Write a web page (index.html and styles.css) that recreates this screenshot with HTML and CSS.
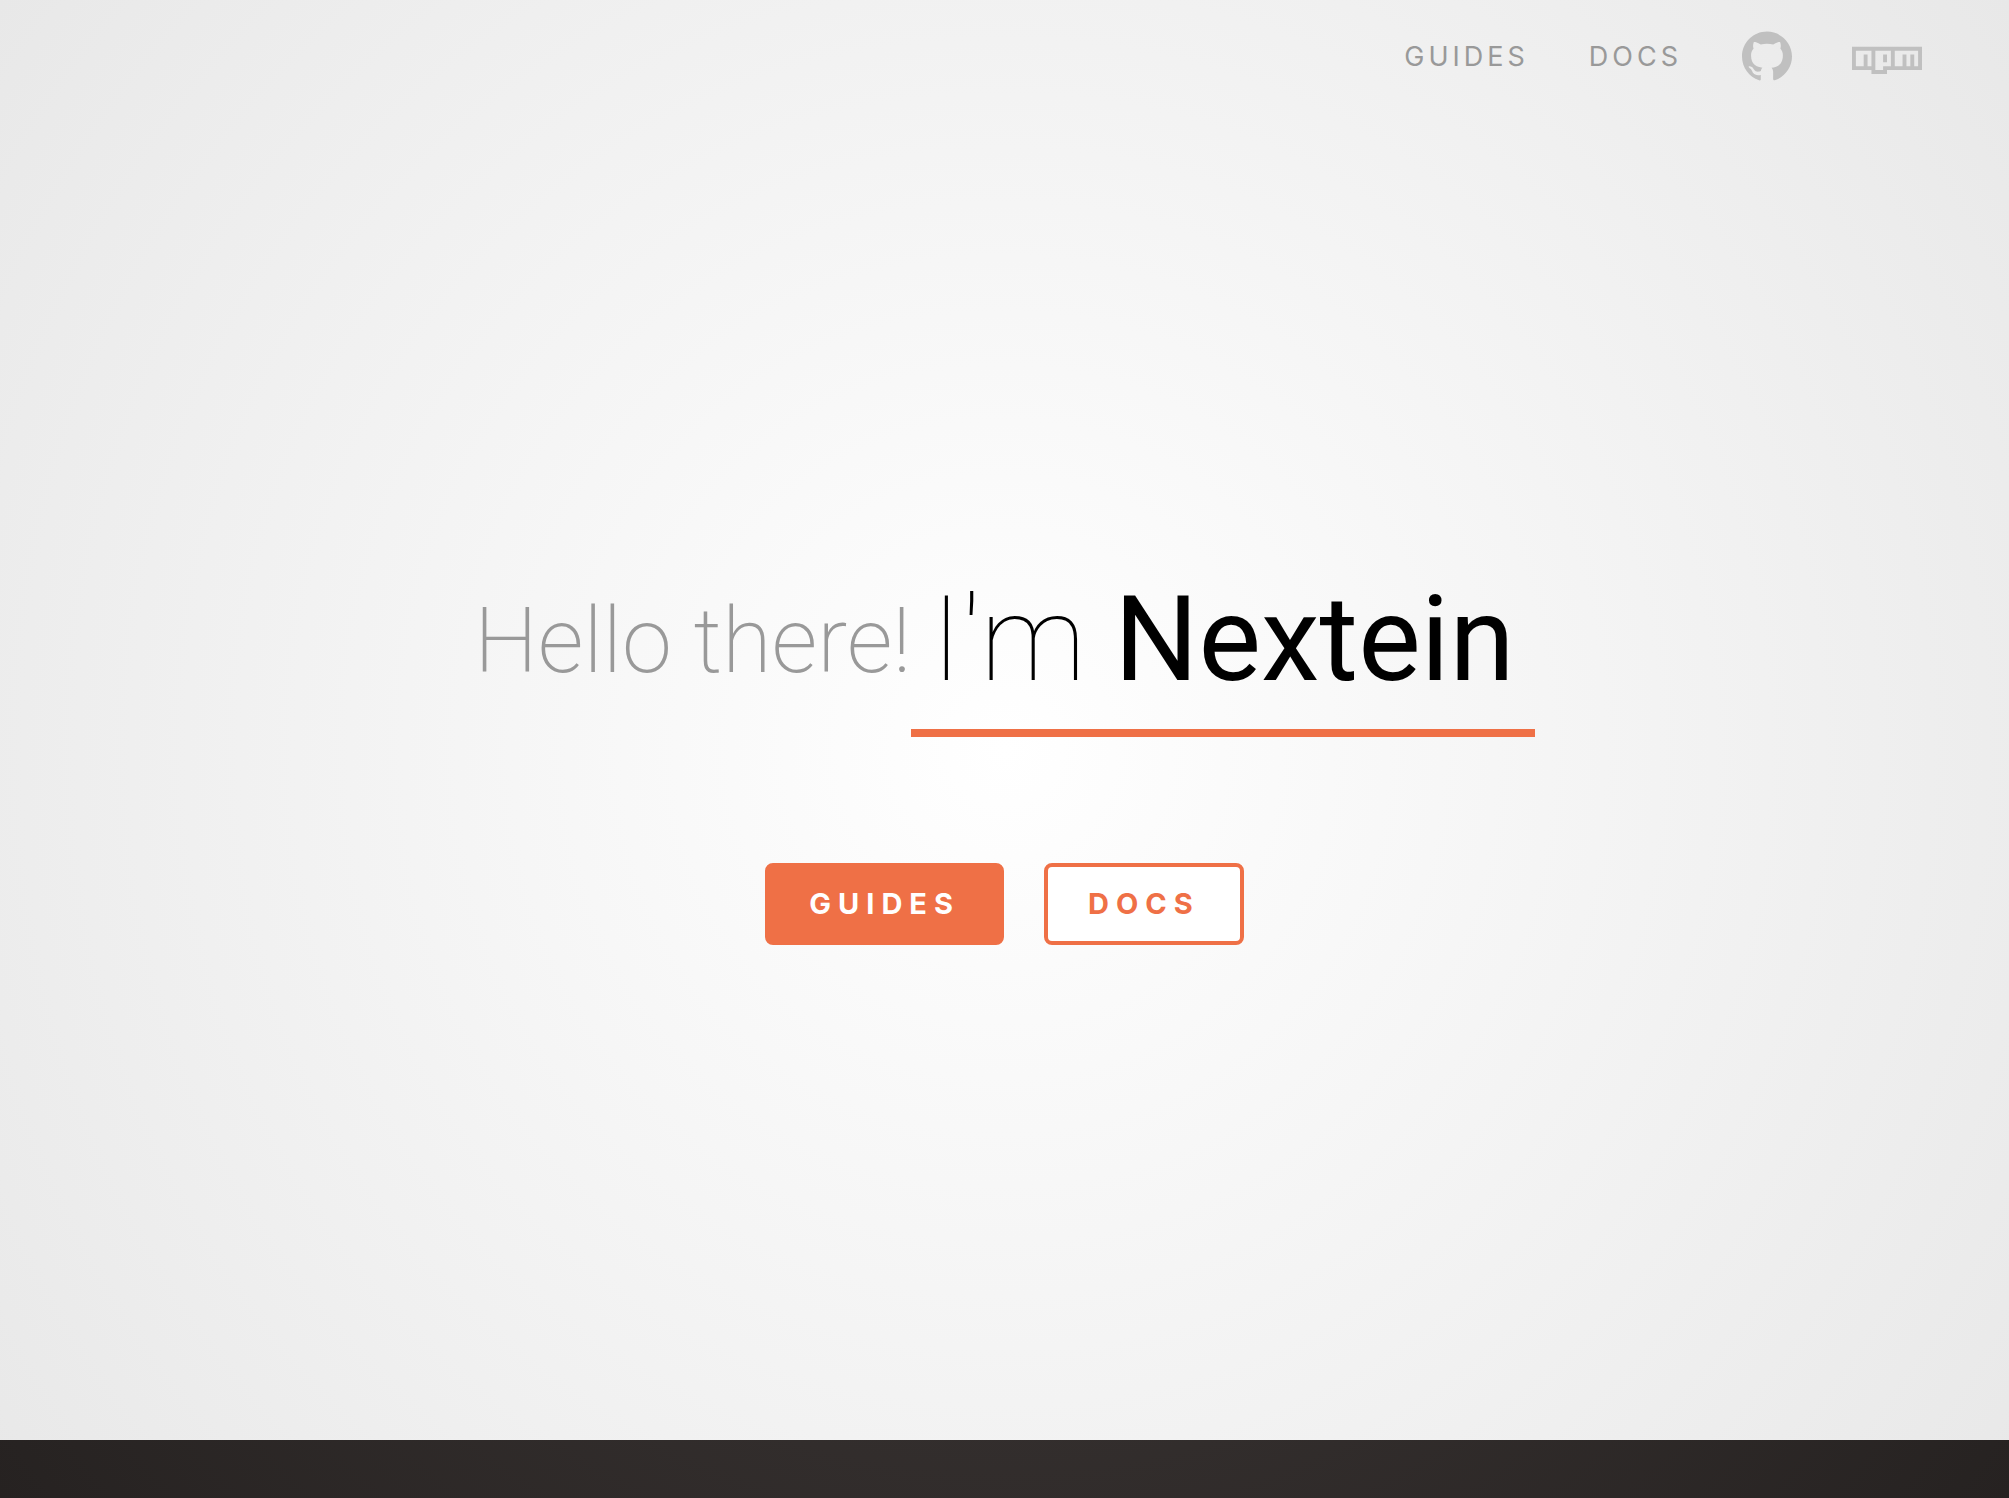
FILE: index.html
```html
<!DOCTYPE html>
<html lang="en">
<head>
    <meta charset="UTF-8">
    <meta name="viewport" content="width=device-width, initial-scale=1.0">
    <title>Nextein</title>
    <link rel="stylesheet" href="styles.css">
</head>
<body>
    <section class="hero">
        <!-- Top navigation -->
        <nav class="nav">
            <a href="#guides">Guides</a>
            <a href="#docs">Docs</a>
            <a href="#github" class="icon" aria-label="GitHub">
                <svg class="github" viewBox="0 0 24 24">
                    <path d="M12 .297c-6.63 0-12 5.373-12 12 0 5.303 3.438 9.8 8.205 11.385.6.113.82-.258.82-.577 0-.285-.01-1.04-.015-2.04-3.338.724-4.042-1.61-4.042-1.61C4.422 18.07 3.633 17.7 3.633 17.7c-1.087-.744.084-.729.084-.729 1.205.084 1.838 1.236 1.838 1.236 1.07 1.835 2.809 1.305 3.495.998.108-.776.417-1.305.76-1.605-2.665-.3-5.466-1.332-5.466-5.93 0-1.31.465-2.38 1.235-3.22-.135-.303-.54-1.523.105-3.176 0 0 1.005-.322 3.3 1.23.96-.267 1.98-.399 3-.405 1.02.006 2.04.138 3 .405 2.28-1.552 3.285-1.23 3.285-1.23.645 1.653.24 2.873.12 3.176.765.84 1.23 1.91 1.23 3.22 0 4.61-2.805 5.625-5.475 5.92.42.36.81 1.096.81 2.22 0 1.606-.015 2.896-.015 3.286 0 .315.21.69.825.57C20.565 22.092 24 17.592 24 12.297c0-6.627-5.373-12-12-12"/>
                </svg>
            </a>
            <a href="#npm" class="icon" aria-label="npm">
                <svg class="npm" viewBox="0 -2 18 9">
                    <path fill-rule="evenodd" d="M0 0h18v6H9v1H5V6H0zM1 5h2V2h1v3h1V1H1zM6 1v5h2V5h2V1zM8 2h1v2H8zM11 1v4h2V2h1v3h1V2h1v3h1V1z"/>
                </svg>
            </a>
        </nav>

        <!-- Welcome message -->
        <main class="welcome">
            <h1 class="title">
                <span class="hello">Hello there!</span>
                <span class="name">I'm <strong>Nextein</strong></span>
            </h1>
            <div class="actions">
                <a href="#guides" class="button primary">Guides</a>
                <a href="#docs" class="button">Docs</a>
            </div>
        </main>
    </section>

    <footer class="footer"></footer>
</body>
</html>
```
FILE: styles.css
```css
* {
    box-sizing: border-box;
}

body {
    margin: 0;
    min-height: 100vh;
    display: flex;
    flex-direction: column;
    font-family: Inter, 'Liberation Sans', sans-serif;
    background: radial-gradient(circle, #fff, #e8e8e8) fixed;
}

a {
    text-decoration: none;
    text-transform: uppercase;
}

.hero {
    flex: 1;
    display: flex;
    flex-direction: column;
}

/* Navigation */
.nav {
    display: flex;
    justify-content: flex-end;
    align-items: center;
    gap: 60px;
    height: 112px;
    padding: 0 87px;
}

.nav a {
    color: #999;
    font-size: 27px;
    letter-spacing: 4px;
}

.icon svg {
    display: block;
    fill: #c0c0c0;
}

.github {
    width: 50px;
    height: 50px;
}

.npm {
    width: 70px;
    height: 35px;
}

/* Welcome */
.welcome {
    flex: 1;
    display: flex;
    flex-direction: column;
    align-items: center;
    justify-content: center;
    gap: 126px;
    padding-bottom: 68px;
}

.title {
    display: flex;
    align-items: center;
    margin: 0;
    font-family: Roboto, Inter, sans-serif;
    font-weight: 100;
    line-height: 1;
}

.hello {
    padding-top: 8px;
    color: #999;
    font-size: 90px;
    font-weight: 200;
}

.name {
    padding: 42px 20px 30px;
    border-bottom: 8px solid #ef7046;
    color: #000;
    font-size: 118px;
}

.name strong {
    font-weight: 450;
}

.actions {
    display: flex;
    gap: 40px;
}

.button {
    padding: 20px 40px;
    border: 4px solid #ef7046;
    border-radius: 8px;
    background: #fff;
    color: #ef7046;
    font-size: 29px;
    font-weight: 700;
    line-height: 34px;
    letter-spacing: 7px;
}

.primary {
    background: #ef7046;
    color: #fff;
}

.footer {
    height: 58px;
    background: radial-gradient(circle, #423c3b, #262221) fixed;
}
```
